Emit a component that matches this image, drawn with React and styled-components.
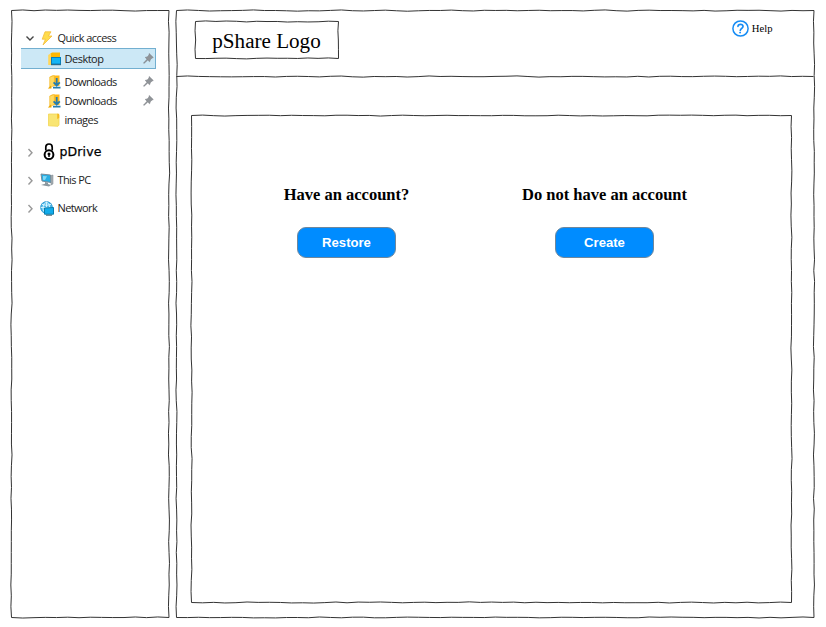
import React from 'react';
import styled, { createGlobalStyle } from 'styled-components';

const Global = createGlobalStyle`
  * { box-sizing: border-box; }
  body { margin: 0; background: #fff; color: #000; }
`;

const Page = styled.div`
  display: flex;
  gap: 6px;
  width: 826px;
  height: 627px;
  padding: 9.5px 12px 9.5px 11px;
  overflow: hidden;
`;
const Panel = styled.div`
  position: relative;
`;
const Sidebar = styled(Panel)`
  flex: none;
  width: 159px;
  padding: 18.5px 14px 0 10px;
`;
const Main = styled(Panel)`
  flex: 1;
  display: flex;
  flex-direction: column;
  padding-bottom: 15px;
`;
const Header = styled.header`
  display: flex;
  justify-content: space-between;
  align-items: flex-start;
  height: 67.5px;
  padding: 11.5px 41.5px 0 18.5px;
`;
const Logo = styled(Panel)`
  width: 144px;
  height: 38px;
  font: 21.1px/40px "Liberation Serif", serif;
  text-align: center;
  white-space: nowrap;
`;
const Help = styled.a`
  display: flex;
  align-items: center;
  gap: 3px;
  margin-top: -2px;
  font: 10.67px/18px "Liberation Serif", serif;
`;
const Rule = styled.div`
  position: relative;
  height: 0;
`;
const Content = styled(Panel)`
  flex: 1;
  margin: 37.5px 22px 0 15px;
  display: flex;
  padding: 70.5px 58px 0 26.5px;
`;
const Choice = styled.section`
  width: 258px;
  display: flex;
  flex-direction: column;
  align-items: center;
`;
const Question = styled.h2`
  margin: 0;
  font: bold 16.5px/20px "Liberation Serif", serif;
  white-space: nowrap;
`;
const Action = styled.button`
  width: 98.5px;
  height: 31px;
  margin: 22px 0 0;
  padding: 0;
  border: 1px solid #6f879c;
  border-radius: 9px;
  background: #008cff;
  color: #fff;
  font: bold 13.1px/28px "Liberation Sans", sans-serif;
`;
const Row = styled.div`
  display: flex;
  align-items: center;
  height: ${p => p.$h || 20}px;
  margin-top: ${p => p.$top || 0}px;
  padding: 0 1px 0 ${p => (p.$nested ? 26.5 : 3)}px;
  border: 1px solid ${p => (p.$selected ? '#72afd0' : 'transparent')};
  border-left-width: 0;
  background: ${p => (p.$selected ? '#cce8f6' : 'transparent')};
`;
const Label = styled.span`
  flex: 1;
  color: #222;
  font: 11px/18px "Open Sans", sans-serif;
  letter-spacing: ${p => p.$track || 0}px;
  white-space: nowrap;
`;
const DriveLabel = styled(Label)`
  color: #000;
  font: 12.5px/18px "DejaVu Sans", sans-serif;
  -webkit-text-stroke: 0.25px #000;
`;
const IconSlot = styled.span`
  display: flex;
  flex: none;
  justify-content: center;
  width: ${p => p.$w || 18}px;
  svg { display: block; overflow: visible; }
`;
const RootIcon = styled(IconSlot)`
  width: 22.5px;
  padding-left: 2px;
`;
const Strokes = styled.svg`
  position: absolute;
  inset: 0;
  overflow: visible;
  pointer-events: none;
  fill: none;
  stroke: #333;
  stroke-width: 1;
`;

// A hand-drawn line: short curves that drift slightly off the straight edge.
function wobble(x1, y1, x2, y2, seed) {
  let s = seed;
  const rand = () => {
    s = (s * 16807) % 2147483647;
    return s / 2147483647 - 0.5;
  };
  const n = Math.max(2, Math.round(Math.hypot(x2 - x1, y2 - y1) / 22));
  const horizontal = y1 === y2;
  const at = (t, off) => [
    x1 + (x2 - x1) * t + (horizontal ? 0 : off),
    y1 + (y2 - y1) * t + (horizontal ? off : 0),
  ];
  let d = `M${x1} ${y1}`;
  for (let i = 1; i <= n; i++) {
    const c = at((i - 0.5) / n, rand() * 2.4);
    const e = at(i / n, i === n ? 0 : rand() * 0.6);
    d += `Q${c.join(' ')} ${e.join(' ')}`;
  }
  return d;
}

const Frame = ({ w, h, seed }) => (
  <Strokes width={w} height={h}>
    <path d={wobble(0.5, 0.5, w - 0.5, 0.5, seed)} />
    <path d={wobble(w - 0.5, 0.5, w - 0.5, h - 0.5, seed + 911)} />
    <path d={wobble(w - 0.5, h - 0.5, 0.5, h - 0.5, seed + 2713)} />
    <path d={wobble(0.5, h - 0.5, 0.5, 0.5, seed + 5119)} />
  </Strokes>
);

const Chevron = ({ open }) => (
  <IconSlot $w={11}>
    <svg width="10" height="10" fill="none" stroke={open ? '#444' : '#999'} strokeWidth="1.4">
      <path d={open ? 'M1.5 3.5L5 7L8.5 3.5' : 'M3.5 2L7 5.7L3.5 9.5'} />
    </svg>
  </IconSlot>
);
const Bolt = () => (
  <svg width="12" height="15" viewBox="0 0 12 15">
    <path d="M4 .8H10L7.4 5H11L2 14L4.4 8.2H1.2Z" fill="#ffdc4c" stroke="#f2bd3c" strokeWidth=".8" />
  </svg>
);
const DesktopIcon = () => (
  <svg width="13" height="14" viewBox="0 0 13 14">
    <path d="M2 2L4 .5H12V7H4V13L1 11.5Z" fill="#ffb800" />
    <path d="M.2 3L3 1.2V13L.2 13Z" fill="#ffd65a" />
    <rect x="3.5" y="5.5" width="9" height="6.5" fill="#13b5f5" stroke="#087eb9" />
    <path d="M3 12.7H13" stroke="#175f80" />
  </svg>
);
const DownloadIcon = () => (
  <svg width="13" height="14" viewBox="0 0 13 14">
    <path d="M4 .5H11.5V11H2V2Z" fill="#ffb91a" />
    <path d="M1.7 2L6.3 .6V10.5L1.7 12.8Z" fill="#ffdb62" stroke="#f3b623" strokeWidth=".6" />
    <path d="M-.2 13.4L3 10.5L3.5 13.4Z" fill="#eda800" />
    <path d="M8.7 3V10M5.6 7.4L8.7 10.5L11.8 7.4M5 12.7H12.5" fill="none" stroke="#267eae" strokeWidth="1.8" />
  </svg>
);
const FolderIcon = () => (
  <svg width="12" height="14" viewBox="0 0 12 14">
    <path d="M.5 1H10L11 2.5V12L10 13.3L.5 12.8Z" fill="#f9e573" stroke="#f2d653" strokeWidth=".8" />
    <path d="M9.2 .8H11.2V5L9.2 6Z" fill="#f5b91c" />
  </svg>
);
const LockIcon = () => (
  <svg width="12" height="18" viewBox="0 0 12 18" fill="none" stroke="#000">
    <path d="M2.8 7.5V4.2a3.2 3.2 0 0 1 6.4 0V7.5" strokeWidth="1.7" />
    <circle cx="6" cy="11.7" r="4.4" strokeWidth="2" />
    <circle cx="6" cy="11" r="1.5" fill="#000" stroke="none" />
    <path d="M6 11V14" strokeWidth="1.4" />
  </svg>
);
const ComputerIcon = () => (
  <svg width="14" height="14" viewBox="0 0 14 14">
    <path d="M1 1L10.5 2L11 9.5L2 8Z" fill="#27aee4" stroke="#758b99" strokeWidth="1" />
    <path d="M3 3L7 3.3L5 7L3 6.8Z" fill="#83d8f4" />
    <path d="M11 2.5L13 2V11L11 12Z" fill="#a9b1b5" stroke="#78838a" strokeWidth=".5" />
    <path d="M5 9L8 9.5V11L11 12L9 13.5L1 12L5 10.8Z" fill="#8c989f" />
  </svg>
);
const NetworkIcon = () => (
  <svg width="15" height="15" viewBox="0 0 15 15">
    <circle cx="6.5" cy="6.5" r="5.9" fill="#4fb9ea" stroke="#2893cc" strokeWidth=".8" />
    <path d="M.8 6.5H12M6.5 .8V12M2 3.4Q6.5 5.3 11 3.4M6.5.8Q0 6 5 12M6.5.8Q10 3 9.8 7" fill="none" stroke="#def7ff" strokeWidth=".9" />
    <path d="M4.5 7L13.5 6.5V13.2H4.5Z" fill="#11aceb" stroke="#087bab" />
    <path d="M6 14.2H12" stroke="#41606d" />
  </svg>
);
const Pin = () => (
  <svg width="11" height="11" viewBox="0 0 11 11">
    <path d="M6.2.5L10.3 4.5L9 5L7.3 6.8L6.6 8.8L4.8 7.1L1 10.4L.5 10.1L4 6.2L2.2 4.4L4.2 3.9L6 2.1Z" fill="#909498" stroke="#767b80" strokeWidth=".5" />
  </svg>
);
const HelpIcon = () => (
  <svg width="17" height="17" viewBox="0 0 17 17" fill="none" stroke="#168cf4">
    <circle cx="8.5" cy="8.5" r="7.6" strokeWidth="1.5" />
    <path d="M6 6.3C6.2 3.7 11.2 3.6 11 6.5C10.9 8.2 8.6 8.4 8.3 10.4" strokeWidth="1.7" strokeLinecap="round" />
    <circle cx="8.1" cy="12.6" r=".95" fill="#168cf4" stroke="none" />
  </svg>
);

const NestedRow = ({ icon, children, pinned, track, ...row }) => (
  <Row $nested {...row}>
    <IconSlot $w={13}>{icon}</IconSlot>
    <IconSlot $w={4} />
    <Label $track={track}>{children}</Label>
    {pinned && <Pin />}
  </Row>
);

export default function App() {
  return (
    <Page>
      <Global />
      <Sidebar as="nav">
        <Frame w={158.5} h={608} seed={417} />
        <Row>
          <Chevron open />
          <RootIcon><Bolt /></RootIcon>
          <Label $track={-0.55}>Quick access</Label>
        </Row>
        <NestedRow icon={<DesktopIcon />} pinned track={-0.5} $h={21} $selected>Desktop</NestedRow>
        <NestedRow icon={<DownloadIcon />} pinned track={-0.57} $h={19} $top={3}>Downloads</NestedRow>
        <NestedRow icon={<DownloadIcon />} pinned track={-0.57} $h={19}>Downloads</NestedRow>
        <NestedRow icon={<FolderIcon />} track={-0.5} $h={20}>images</NestedRow>
        <Row $top={12}>
          <Chevron />
          <IconSlot $w={2} />
          <RootIcon><LockIcon /></RootIcon>
          <DriveLabel $track={0.12}>pDrive</DriveLabel>
        </Row>
        <Row $top={8}>
          <Chevron />
          <RootIcon><ComputerIcon /></RootIcon>
          <Label $track={-0.6}>This PC</Label>
        </Row>
        <Row $top={8}>
          <Chevron />
          <RootIcon><NetworkIcon /></RootIcon>
          <Label $track={-0.6}>Network</Label>
        </Row>
      </Sidebar>
      <Main as="main">
        <Frame w={638.5} h={608} seed={9035} />
        <Header>
          <Logo>
            <Frame w={144} h={38} seed={3371} />
            pShare Logo
          </Logo>
          <Help><HelpIcon />Help</Help>
        </Header>
        <Rule>
          <Strokes width="638" height="1"><path d={wobble(0.5, -0.5, 637.5, -0.5, 7727)} /></Strokes>
        </Rule>
        <Content>
          <Frame w={601} h={488} seed={15013} />
          <Choice>
            <Question>Have an account?</Question>
            <Action>Restore</Action>
          </Choice>
          <Choice>
            <Question>Do not have an account</Question>
            <Action>Create</Action>
          </Choice>
        </Content>
      </Main>
    </Page>
  );
}
